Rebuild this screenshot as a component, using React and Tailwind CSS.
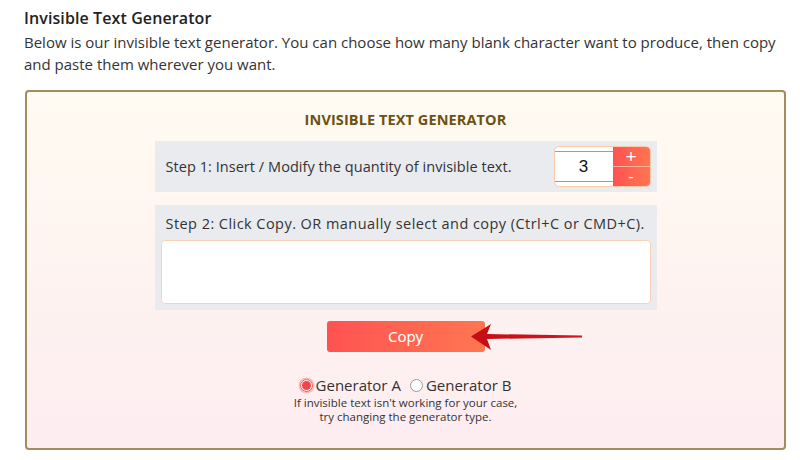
import React from "react";

function Arrow() {
  return (
    <svg width="114" height="30" viewBox="0 0 114 30" className="absolute left-[144px] top-[1px]">
      <defs>
        <linearGradient id="ag" x1="0" x2="1" y1="0" y2="0">
          <stop offset="0" stopColor="#c40d14" />
          <stop offset="1" stopColor="#d5161e" />
        </linearGradient>
      </defs>
      <path d="M0 14.5 L20 2 L16 12 L111 13.6 L111 15.4 L16 17 L20 28 Z" fill="url(#ag)" />
    </svg>
  );
}

export default function App() {
  return (
    <div className="w-[800px] h-[460px] bg-white overflow-hidden text-[#2e2e2e]" style={{ fontFamily: "'Open Sans', sans-serif" }}>
      <div className="pl-[24px] pt-[7px]">
        <h2 className="text-[16px] font-semibold leading-[22px] text-[#222] tracking-[0.1px]">Invisible Text Generator</h2>
        <p className="text-[15px] leading-[22px] text-[#333] mt-[2px] w-[770px]">
          Below is our invisible text generator. You can choose how many blank character want to produce, then copy and paste them wherever you want.
        </p>
      </div>
      <div className="ml-[25px] mt-[15px] w-[761px] h-[360px] border-2 border-[#a38c5e] rounded-[4px] bg-gradient-to-b from-[#fffbf1] to-[#fdecf0] flex flex-col items-center">
        <div className="mt-[19px] text-[14.5px] font-bold text-[#6b5212] leading-[18px] tracking-[0.1px]">INVISIBLE TEXT GENERATOR</div>
        <div className="mt-[12px] w-[502px] h-[51px] bg-[#eaebee] flex items-center justify-between pl-[11px] pr-[6px]">
          <span className="text-[14.5px] text-[#333] tracking-[0.05px]">Step 1: Insert / Modify the quantity of invisible text.</span>
          <div className="flex h-[41px] w-[97px] border border-[#f9c9ab] rounded-[5px] overflow-hidden bg-white">
            <div className="flex-1 flex items-center">
              <div className="w-full h-[31px] border-y border-[#f07a78] flex items-center justify-center text-[17px] text-[#111]" style={{ fontFamily: "'Liberation Sans', sans-serif" }}>3</div>
            </div>
            <div className="w-[37px] flex flex-col bg-gradient-to-r from-[#ff5151] to-[#ff7550] text-white" style={{ fontFamily: "'Liberation Sans', sans-serif" }}>
              <div className="flex-1 flex items-center justify-center text-[19px] leading-none border-b border-[#ffb0a0]">+</div>
              <div className="flex-1 flex items-center justify-center text-[16px] leading-none">-</div>
            </div>
          </div>
        </div>
        <div className="mt-[13px] w-[502px] h-[105px] bg-[#eaebee] px-[6px] pt-[9px]">
          <div className="text-[14.5px] text-[#333] pl-[5px] leading-[20px] tracking-[0.45px] whitespace-nowrap">Step 2: Click Copy. OR manually select and copy (Ctrl+C or CMD+C).</div>
          <div className="mt-[6px] h-[64px] bg-white border border-[#f9d2b6] rounded-[4px]"></div>
        </div>
        <div className="relative mt-[11px]">
          <button className="w-[158px] h-[31px] rounded-[3px] bg-gradient-to-r from-[#ff5252] to-[#ff7551] text-white text-[15px]" style={{ fontFamily: "'Noto Sans', sans-serif" }}>Copy</button>
          <Arrow />
        </div>
        <div className="mt-[24px] flex items-center text-[15px] text-[#333] leading-[18px]">
          <span className="w-[13px] h-[13px] rounded-full border border-[#f05a5a] flex items-center justify-center mr-[3px] shadow-[0_0_0_1.5px_#fbb]">
            <span className="w-[9px] h-[9px] rounded-full bg-[#f04848]"></span>
          </span>
          <span>Generator A</span>
          <span className="w-[13px] h-[13px] rounded-full border border-[#9a9a9a] bg-white ml-[9px] mr-[3px]"></span>
          <span>Generator B</span>
        </div>
        <div className="mt-[2px] text-[11.5px] leading-[14px] text-[#333] text-center">
          If invisible text isn't working for your case,<br />try changing the generator type.
        </div>
      </div>
    </div>
  );
}
